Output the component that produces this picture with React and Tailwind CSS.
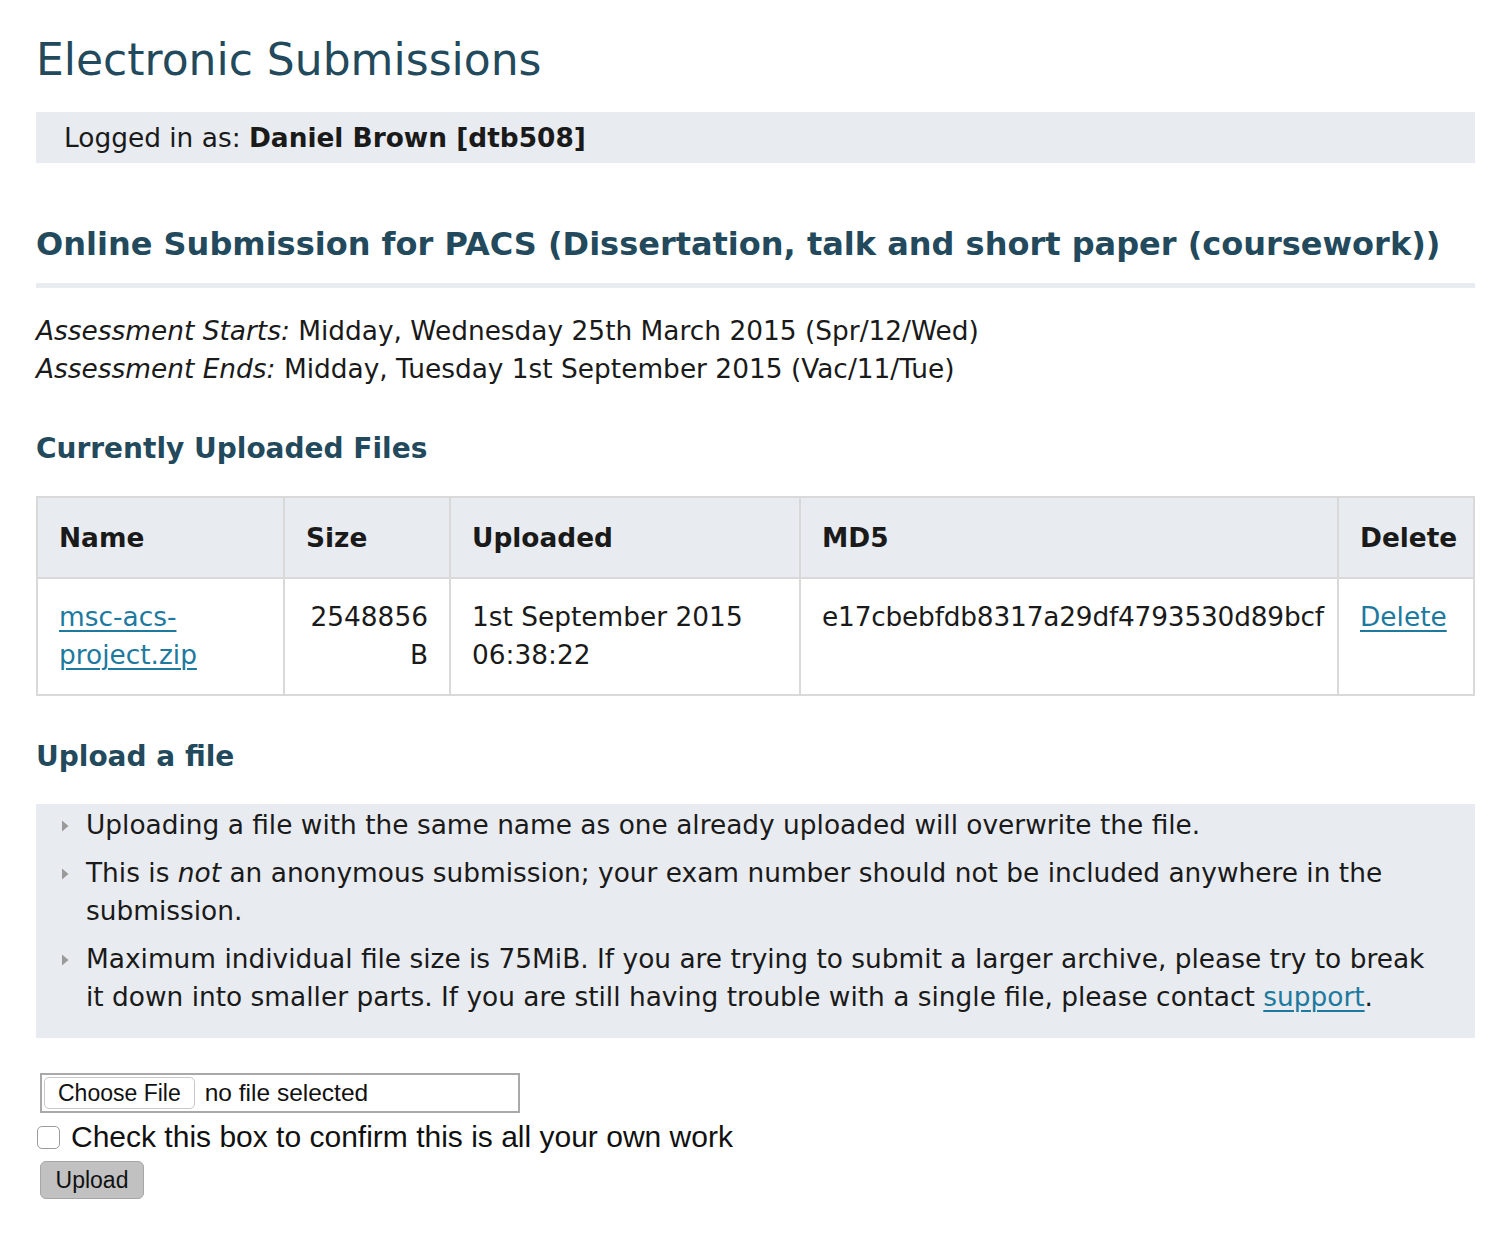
const body = { fontFamily: '"DejaVu Sans", Verdana, sans-serif' };
const ui = { fontFamily: '"Liberation Sans", Arial, sans-serif' };

const Bullet = () => (
  <svg width="8" height="14" viewBox="0 0 8 14" className="absolute left-[-25px] top-[13px]">
    <path d="M1 1.5 L7.5 7 L1 12.5 Z" fill="#9a9a9a" />
  </svg>
);

const Th = ({ className = "", children }) => (
  <th className={`border-2 border-[#d9d9d9] bg-[#e8ebef] px-[21px] text-left font-bold align-middle ${className}`}>
    {children}
  </th>
);

const Td = ({ className = "", children }) => (
  <td className={`border-2 border-[#d9d9d9] px-[21px] pt-[19px] pb-[20px] align-top ${className}`}>
    {children}
  </td>
);

export default function App() {
  return (
    <div className="min-h-screen bg-white text-[#1a1a1a] text-[26.4px] leading-[38px]" style={body}>
      <div className="pl-[36px] pr-[25px] pt-[30px]">
        <h1 className="text-[44px] leading-[60px] font-normal text-[#234a5c]">Electronic Submissions</h1>

        <div className="mt-[22px] bg-[#e8ebef] h-[51px] flex items-center pl-[28px]">
          <span>
            Logged in as: <b>Daniel Brown [dtb508]</b>
          </span>
        </div>

        <h2 className="mt-[61px] text-[32px] leading-[40px] font-bold text-[#234a5c] pb-[19px] border-b-[5px] border-[#e8ebef]">
          Online Submission for PACS (Dissertation, talk and short paper (coursework))
        </h2>

        <div className="mt-[24px]">
          <div>
            <i>Assessment Starts:</i> Midday, Wednesday 25th March 2015 (Spr/12/Wed)
          </div>
          <div>
            <i>Assessment Ends:</i> Midday, Tuesday 1st September 2015 (Vac/11/Tue)
          </div>
        </div>

        <h3 className="mt-[41px] text-[28px] leading-[40px] font-bold text-[#234a5c]">Currently Uploaded Files</h3>

        <table className="mt-[27px] w-full border-collapse table-fixed">
          <colgroup>
            <col className="w-[247px]" />
            <col className="w-[166px]" />
            <col className="w-[350px]" />
            <col className="w-[538px]" />
            <col />
          </colgroup>
          <thead>
            <tr className="h-[81px]">
              <Th>Name</Th>
              <Th>Size</Th>
              <Th>Uploaded</Th>
              <Th>MD5</Th>
              <Th>Delete</Th>
            </tr>
          </thead>
          <tbody>
            <tr>
              <Td>
                <a href="#" className="text-[#1d7a9e] underline underline-offset-[4px] decoration-[2px]">
                  msc-acs-
                  <br />
                  project.zip
                </a>
              </Td>
              <Td className="text-right">
                2548856
                <br />B
              </Td>
              <Td>
                1st September 2015
                <br />
                06:38:22
              </Td>
              <Td className="whitespace-nowrap tracking-[-0.2px]">e17cbebfdb8317a29df4793530d89bcf</Td>
              <Td>
                <a href="#" className="text-[#1d7a9e] underline underline-offset-[4px] decoration-[2px]">
                  Delete
                </a>
              </Td>
            </tr>
          </tbody>
        </table>

        <h3 className="mt-[41px] text-[28px] leading-[40px] font-bold text-[#234a5c]">Upload a file</h3>

        <ul className="mt-[27px] bg-[#e8ebef] pt-[2px] pb-[22px] pl-[50px] pr-[50px]">
          <li className="relative mb-[10px]">
            <Bullet />
            Uploading a file with the same name as one already uploaded will overwrite the file.
          </li>
          <li className="relative mb-[10px]">
            <Bullet />
            This is <i>not</i> an anonymous submission; your exam number should not be included anywhere in the
            submission.
          </li>
          <li className="relative">
            <Bullet />
            Maximum individual file size is 75MiB. If you are trying to submit a larger archive, please try to break
            it down into smaller parts. If you are still having trouble with a single file, please contact{" "}
            <a href="#" className="text-[#1d7a9e] underline underline-offset-[4px] decoration-[2px]">
              support
            </a>
            .
          </li>
        </ul>

        <div className="mt-[35px]" style={ui}>
          <div className="ml-[4px] w-[480px] h-[40px] border-2 border-[#a9a9a9] flex items-center pl-[2px] gap-[10px] text-[23px]">
            <button className="h-[32px] px-[13px] bg-white border border-[#c8c8c8] rounded-[5px] leading-none text-[#111]">
              Choose File
            </button>
            <span className="text-[24.5px] text-[#111]">no file selected</span>
          </div>

          <label className="mt-[7px] flex items-center gap-[11px] text-[30px] leading-[34px] text-[#111]">
            <input
              type="checkbox"
              className="appearance-none ml-[1px] w-[23px] h-[23px] border border-[#9c9c9c] rounded-[5px] bg-white"
            />
            Check this box to confirm this is all your own work
          </label>

          <button className="mt-[7px] ml-[4px] h-[38px] w-[104px] bg-[#c1c1c1] border border-[#a6a6a6] rounded-[6px] text-[23px] leading-none text-[#111]">
            Upload
          </button>
        </div>
      </div>
    </div>
  );
}
